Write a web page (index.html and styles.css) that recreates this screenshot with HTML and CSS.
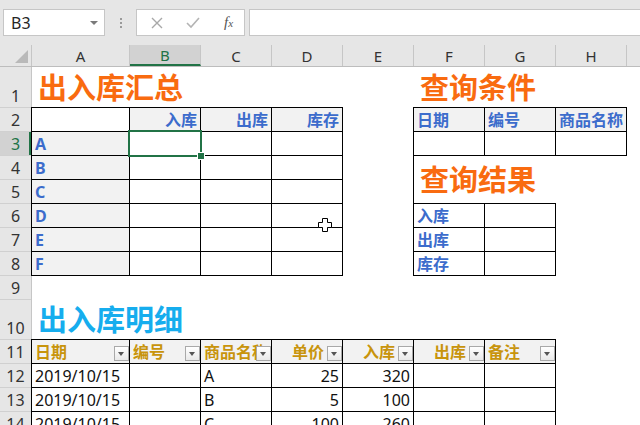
FILE: index.html
```html
<!DOCTYPE html>
<html lang="zh-CN">
<head>
    <meta charset="UTF-8">
    <title>出入库汇总</title>
    <link rel="stylesheet" href="styles.css">
</head>
<body>
    <!-- Formula bar -->
    <div class="toolbar">
        <div class="name-box">
            <span>B3</span>
            <span class="caret"></span>
        </div>
        <div class="grip"><i></i><i></i><i></i></div>
        <div class="fn-box">
            <svg width="14" height="14" viewBox="0 0 14 14"><path d="M2 2 L12 12 M12 2 L2 12" stroke="#a8a8a8" stroke-width="1.4" fill="none"/></svg>
            <svg width="16" height="14" viewBox="0 0 16 14"><path d="M2 7 L6 11 L14 2" stroke="#b4b4b4" stroke-width="1.6" fill="none"/></svg>
            <span class="fx">f<small>x</small></span>
        </div>
        <div class="formula"></div>
    </div>

    <div class="sheet">
        <!-- Column letters -->
        <div class="col-heads">
            <div class="corner">
                <svg width="13" height="13" viewBox="0 0 13 13"><path d="M13 0 L13 13 L0 13 Z" fill="#b9b9b9"/></svg>
            </div>
            <div class="ch wide">A</div>
            <div class="ch active">B</div>
            <div class="ch">C</div>
            <div class="ch">D</div>
            <div class="ch">E</div>
            <div class="ch">F</div>
            <div class="ch">G</div>
            <div class="ch">H</div>
            <div class="ch rest"></div>
        </div>

        <div class="body">
            <!-- Row numbers -->
            <div class="row-heads">
                <div class="rh tall">1</div>
                <div class="rh">2</div>
                <div class="rh active">3</div>
                <div class="rh">4</div>
                <div class="rh">5</div>
                <div class="rh">6</div>
                <div class="rh">7</div>
                <div class="rh">8</div>
                <div class="rh">9</div>
                <div class="rh mid">10</div>
                <div class="rh">11</div>
                <div class="rh">12</div>
                <div class="rh">13</div>
                <div class="rh">14</div>
            </div>

            <div class="cells">
                <div class="title orange title-sum">出入库汇总</div>

                <div class="grid-table sum-table">
                    <div class="c"></div>
                    <div class="c hd">入库</div>
                    <div class="c hd">出库</div>
                    <div class="c hd">库存</div>
                    <div class="c key">A</div><div class="c"></div><div class="c"></div><div class="c"></div>
                    <div class="c key">B</div><div class="c"></div><div class="c"></div><div class="c"></div>
                    <div class="c key">C</div><div class="c"></div><div class="c"></div><div class="c"></div>
                    <div class="c key">D</div><div class="c"></div><div class="c"></div><div class="c"></div>
                    <div class="c key">E</div><div class="c"></div><div class="c"></div><div class="c"></div>
                    <div class="c key">F</div><div class="c"></div><div class="c"></div><div class="c"></div>
                </div>
                <div class="sel-box"></div>

                <div class="title orange title-query">查询条件</div>
                <div class="grid-table query-table">
                    <div class="c hd left">日期</div>
                    <div class="c hd left">编号</div>
                    <div class="c hd left">商品名称</div>
                    <div class="c"></div><div class="c"></div><div class="c"></div>
                </div>

                <div class="title orange title-result">查询结果</div>
                <div class="grid-table result-table">
                    <div class="c lbl">入库</div><div class="c"></div>
                    <div class="c lbl">出库</div><div class="c"></div>
                    <div class="c lbl">库存</div><div class="c"></div>
                </div>

                <div class="title blue title-detail">出入库明细</div>
                <div class="grid-table detail-table">
                    <div class="c th">日期<span class="flt"></span></div>
                    <div class="c th">编号<span class="flt"></span></div>
                    <div class="c th">商品名称<span class="flt"></span></div>
                    <div class="c th r">单价<span class="flt"></span></div>
                    <div class="c th r">入库<span class="flt"></span></div>
                    <div class="c th r">出库<span class="flt"></span></div>
                    <div class="c th">备注<span class="flt"></span></div>

                    <div class="c">2019/10/15</div><div class="c"></div><div class="c">A</div>
                    <div class="c num">25</div><div class="c num">320</div><div class="c"></div><div class="c"></div>

                    <div class="c">2019/10/15</div><div class="c"></div><div class="c">B</div>
                    <div class="c num">5</div><div class="c num">100</div><div class="c"></div><div class="c"></div>

                    <div class="c">2019/10/15</div><div class="c"></div><div class="c">C</div>
                    <div class="c num">100</div><div class="c num">260</div><div class="c"></div><div class="c"></div>
                </div>
            </div>
        </div>
    </div>

    <!-- mouse pointer over D6 -->
    <svg class="cursor" width="16" height="16" viewBox="0 0 16 16">
        <path d="M5.5 1.5 H10.5 V5.5 H14.5 V10.5 H10.5 V14.5 H5.5 V10.5 H1.5 V5.5 H5.5 Z" fill="#fff" stroke="#000" stroke-width="1"/>
    </svg>
</body>
</html>
```

FILE: styles.css
```css
html, body {
    margin: 0;
    height: 425px;
    overflow: hidden;
}
body {
    font-family: "Noto Sans", "Noto Sans CJK SC", sans-serif;
    background: #ffffff;
    position: relative;
}

/* ---------- formula bar ---------- */
.toolbar {
    height: 45px;
    background: #e6e6e6;
    display: flex;
    align-items: flex-start;
    padding-top: 9px;
    box-sizing: border-box;
}
.name-box {
    margin-left: 3px;
    width: 102px;
    height: 27px;
    background: #fff;
    border: 1px solid #c6c6c6;
    box-sizing: border-box;
    display: flex;
    align-items: center;
    justify-content: space-between;
    padding: 0 6px 0 7px;
    font-size: 16px;
    color: #262626;
}
.caret {
    width: 0;
    height: 0;
    border-left: 4px solid transparent;
    border-right: 4px solid transparent;
    border-top: 4px solid #7a7a7a;
}
.grip {
    width: 31px;
    height: 27px;
    display: flex;
    flex-direction: column;
    align-items: center;
    justify-content: center;
    gap: 2px;
}
.grip i {
    width: 2px;
    height: 2px;
    background: #9a9a9a;
}
.fn-box {
    width: 109px;
    height: 27px;
    background: #fff;
    border: 1px solid #c6c6c6;
    box-sizing: border-box;
    display: flex;
    align-items: center;
    padding-left: 13px;
    gap: 21px;
}
.fx {
    font-family: "Liberation Serif", serif;
    font-style: italic;
    font-size: 15px;
    color: #555;
    margin-left: 2px;
}
.fx small {
    font-size: 11px;
}
.formula {
    flex: 1;
    margin-left: 4px;
    height: 27px;
    background: #fff;
    border: 1px solid #c6c6c6;
    border-right: none;
    box-sizing: border-box;
}

/* ---------- headers ---------- */
.col-heads {
    display: flex;
    height: 22px;
    background: #e6e6e6;
    border-bottom: 1px solid #bdbdbd;
    box-sizing: border-box;
}
.corner {
    width: 32px;
    flex: none;
    border-right: 1px solid #c6c6c6;
    box-sizing: border-box;
    display: flex;
    align-items: flex-end;
    justify-content: flex-end;
    padding: 0 3px 3px 0;
}
.ch {
    width: 71px;
    flex: none;
    border-right: 1px solid #c6c6c6;
    box-sizing: border-box;
    text-align: center;
    font-size: 15px;
    line-height: 22px;
    color: #333;
}
.ch.wide { width: 98px; }
.ch.rest { flex: 1; border-right: none; }
.ch.active {
    background: #d2d2d2;
    color: #217346;
    border-bottom: 2px solid #217346;
    line-height: 20px;
}

.body {
    display: flex;
}
.row-heads {
    width: 32px;
    flex: none;
    background: #e6e6e6;
    border-right: 1px solid #c6c6c6;
    box-sizing: border-box;
}
.rh {
    height: 24px;
    border-bottom: 1px solid #d0d0d0;
    box-sizing: border-box;
    display: flex;
    align-items: flex-end;
    justify-content: center;
    font-size: 16px;
    line-height: 22px;
    color: #333;
}
.rh.tall { height: 41px; }
.rh.mid { height: 40px; }
.rh.active {
    background: #d2d2d2;
    color: #217346;
    box-shadow: inset -2px 0 0 #217346;
}

/* ---------- sheet cells ---------- */
.cells {
    flex: 1;
    display: grid;
    grid-template-columns: 98px repeat(7, 71px) 1fr;
    grid-template-rows: 41px repeat(8, 24px) 40px repeat(4, 24px);
}
.title {
    font-size: 29px;
    font-weight: bold;
    line-height: 36px;
    white-space: nowrap;
    display: flex;
    align-items: flex-end;
    padding-left: 6px;
    padding-bottom: 2px;
}
.orange { color: #f96b10; }
.blue { color: #16adee; }

.title-sum { grid-column: 1 / 5; grid-row: 1; }
.title-query { grid-column: 6 / 9; grid-row: 1; }
.title-result {
    grid-column: 6 / 9;
    grid-row: 4 / 6;
    align-items: center;
    padding-bottom: 0;
    margin-left: -1px;
    border-left: 1px solid #000;
}
.title-detail { grid-column: 1 / 6; grid-row: 10; }

.grid-table {
    display: grid;
    grid-auto-rows: 24px;
    margin: -1px 0 0 -1px;
    border-top: 1px solid #000;
    border-left: 1px solid #000;
}
.sum-table {
    grid-column: 1 / 5;
    grid-row: 2 / 9;
    grid-template-columns: 98px repeat(3, 71px);
}
.query-table {
    grid-column: 6 / 9;
    grid-row: 2 / 4;
    grid-template-columns: repeat(3, 71px);
}
.result-table {
    grid-column: 6 / 8;
    grid-row: 6 / 9;
    grid-template-columns: repeat(2, 71px);
}
.detail-table {
    grid-column: 1 / 8;
    grid-row: 11 / 15;
    grid-template-columns: 98px repeat(6, 71px);
}

.c {
    border-right: 1px solid #000;
    border-bottom: 1px solid #000;
    box-sizing: border-box;
    padding: 0 3px;
    display: flex;
    align-items: flex-end;
    font-size: 16px;
    line-height: 22px;
    color: #111;
    white-space: nowrap;
    overflow: hidden;
    position: relative;
}
.c.hd {
    background: #f2f2f2;
    color: #3c6ccc;
    font-weight: bold;
    justify-content: flex-end;
}
.c.hd.left { justify-content: flex-start; }
.c.key {
    background: #f2f2f2;
    color: #3c6ccc;
    font-weight: bold;
}
.c.lbl {
    color: #3c6ccc;
    font-weight: bold;
}
.c.num { justify-content: flex-end; }
.c.th {
    background: #f2f2f2;
    color: #c8940c;
    font-weight: bold;
}
.c.th.r {
    justify-content: flex-end;
    padding-right: 18px;
}
.flt {
    position: absolute;
    right: 0;
    bottom: 2px;
    width: 15px;
    height: 15px;
    box-sizing: border-box;
    border: 1px solid #a9a9a9;
    background: linear-gradient(#ffffff, #e9e9e9);
}
.flt::after {
    content: "";
    position: absolute;
    left: 3px;
    top: 5px;
    border-left: 3.5px solid transparent;
    border-right: 3.5px solid transparent;
    border-top: 4px solid #555;
}

/* active cell B3 */
.sel-box {
    grid-column: 2;
    grid-row: 3;
    margin: -2px -1px -1px -2px;
    border: 2px solid #217346;
    position: relative;
    z-index: 2;
}
.sel-box::after {
    content: "";
    position: absolute;
    right: -5px;
    bottom: -5px;
    width: 6px;
    height: 6px;
    background: #217346;
    border: 1px solid #fff;
}

.cursor {
    position: absolute;
    left: 317px;
    top: 217px;
    z-index: 5;
}
```
